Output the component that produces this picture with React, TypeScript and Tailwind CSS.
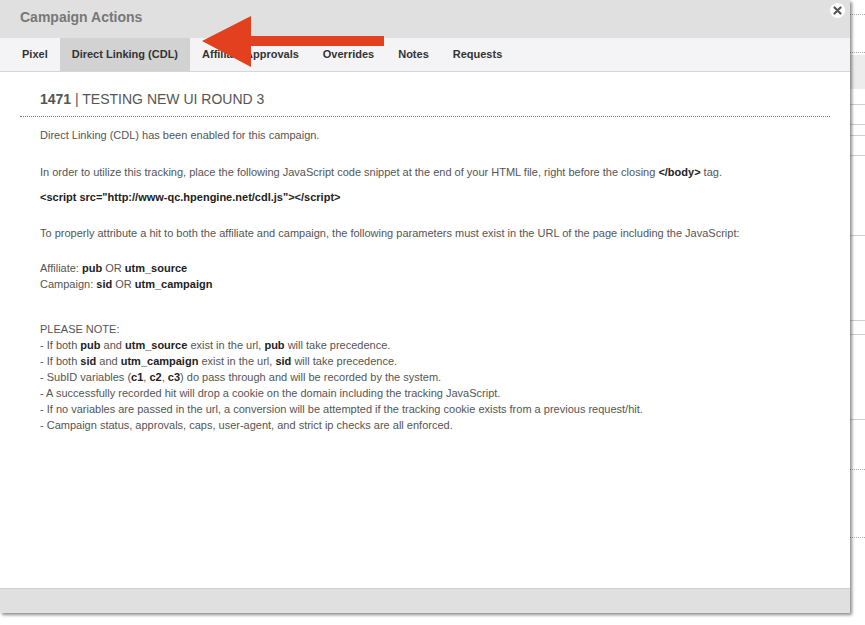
import React from 'react';

const tabs = ['Pixel', 'Direct Linking (CDL)', 'Affiliate Approvals', 'Overrides', 'Notes', 'Requests'];

const notes: React.ReactNode[] = [
  <>- If both <b className="text-[#222]">pub</b> and <b className="text-[#222]">utm_source</b> exist in the url, <b className="text-[#222]">pub</b> will take precedence.</>,
  <>- If both <b className="text-[#222]">sid</b> and <b className="text-[#222]">utm_campaign</b> exist in the url, <b className="text-[#222]">sid</b> will take precedence.</>,
  <>- SubID variables (<b className="text-[#222]">c1</b>, <b className="text-[#222]">c2</b>, <b className="text-[#222]">c3</b>) do pass through and will be recorded by the system.</>,
  <>- A successfully recorded hit will drop a cookie on the domain including the tracking JavaScript.</>,
  <>- If no variables are passed in the url, a conversion will be attempted if the tracking cookie exists from a previous request/hit.</>,
  <>- Campaign status, approvals, caps, user-agent, and strict ip checks are all enforced.</>,
];

function BackdropStrip() {
  // bits of the page behind the modal
  return (
    <div className="flex w-[15px] flex-col">
      <div className="h-[14px]" />
      <div className="border-t border-dotted border-[#aaa]" />
      <div className="h-[37px]" />
      <div className="border-t border-dotted border-[#aaa]" />
      <div className="h-[2px]" />
      <div className="h-[34px] bg-[#ececec]" />
      <div className="h-[15px]" />
      <div className="border-t border-[#d0d0d0]" />
      <div className="h-[19px]" />
      <div className="border-t border-[#d0d0d0]" />
      <div className="h-[10px]" />
      <div className="border-t border-[#d0d0d0]" />
      <div className="h-[19px]" />
      <div className="border-t border-[#d0d0d0]" />
      <div className="h-[79px]" />
      <div className="border-t border-[#d0d0d0]" />
      <div className="h-[84px]" />
      <div className="border-t border-[#d0d0d0]" />
      <div className="h-[13px]" />
      <div className="border-t border-[#d0d0d0]" />
      <div className="h-[84px]" />
      <div className="border-t border-[#d0d0d0]" />
      <div className="h-[49px]" />
      <div className="border-t border-dotted border-[#aaa]" />
      <div className="h-[67px]" />
      <div className="border-t border-dotted border-[#aaa]" />
    </div>
  );
}

export default function App() {
  return (
    <div className="relative flex h-[625px] w-[865px] overflow-hidden bg-white font-['Liberation_Sans',Arial,sans-serif]">
      <div className="relative z-10 flex h-[613px] w-[850px] shrink-0 flex-col bg-white shadow-[2px_2px_3px_rgba(0,0,0,0.45)]">
        <div className="flex h-[38px] items-center bg-[#e0e0e0] px-5 pb-1">
          <h2 className="text-[14px] font-bold text-[#777]">Campaign Actions</h2>
        </div>
        <div className="flex h-[34px] border-b border-[#d6d6d6] bg-[#f4f4f6] pl-[10px]">
          {tabs.map((t, i) => (
            <div
              key={t}
              className={
                i === 1
                  ? 'flex items-center bg-[#d2d2d2] px-3 text-[11px] font-bold text-[#333]'
                  : 'flex items-center px-3 text-[11px] font-bold text-[#333]'
              }
            >
              {t}
            </div>
          ))}
        </div>
        <div className="flex-1 px-5 pt-[18px] text-[11px] leading-[16px] text-[#555]">
          <div className="border-b border-dotted border-[#777] px-5 pb-[8px] text-[14px] leading-[18px] text-[#555]">
            <b>1471</b> | TESTING NEW UI ROUND 3
          </div>
          <div className="px-5 pt-[10px]">
            <p>Direct Linking (CDL) has been enabled for this campaign.</p>
            <p className="mt-[21px]">
              In order to utilize this tracking, place the following JavaScript code snippet at the end of your HTML file, right before the closing <b className="text-[#222]">&lt;/body&gt;</b> tag.
            </p>
            <p className="mt-[9px] font-bold text-[#222]">&lt;script src="http://www-qc.hpengine.net/cdl.js"&gt;&lt;/script&gt;</p>
            <p className="mt-[20px]">
              To properly attribute a hit to both the affiliate and campaign, the following parameters must exist in the URL of the page including the JavaScript:
            </p>
            <p className="mt-[19px]">
              Affiliate: <b className="text-[#222]">pub</b> OR <b className="text-[#222]">utm_source</b>
            </p>
            <p>
              Campaign: <b className="text-[#222]">sid</b> OR <b className="text-[#222]">utm_campaign</b>
            </p>
            <p className="mt-[29px]">PLEASE NOTE:</p>
            {notes.map((n, i) => (
              <p key={i}>{n}</p>
            ))}
          </div>
        </div>
        <div className="h-[25px] border-t border-[#cfcfcf] bg-[#e0e0e0]" />
        <div className="absolute left-[830px] top-[3px] flex h-[15px] w-[15px] items-center justify-center rounded-full bg-white">
          <svg width="9" height="9" viewBox="0 0 9 9">
            <path d="M1.5 1.5 L7.5 7.5 M7.5 1.5 L1.5 7.5" stroke="#555" strokeWidth="2.2" strokeLinecap="round" />
          </svg>
        </div>
      </div>
      <BackdropStrip />
      <svg className="absolute left-0 top-0 z-20" width="400" height="80" viewBox="0 0 400 80">
        <polygon points="202,41 251,16 251,36 384,36 384,46 251,46 251,67" fill="#e2401f" />
      </svg>
    </div>
  );
}
